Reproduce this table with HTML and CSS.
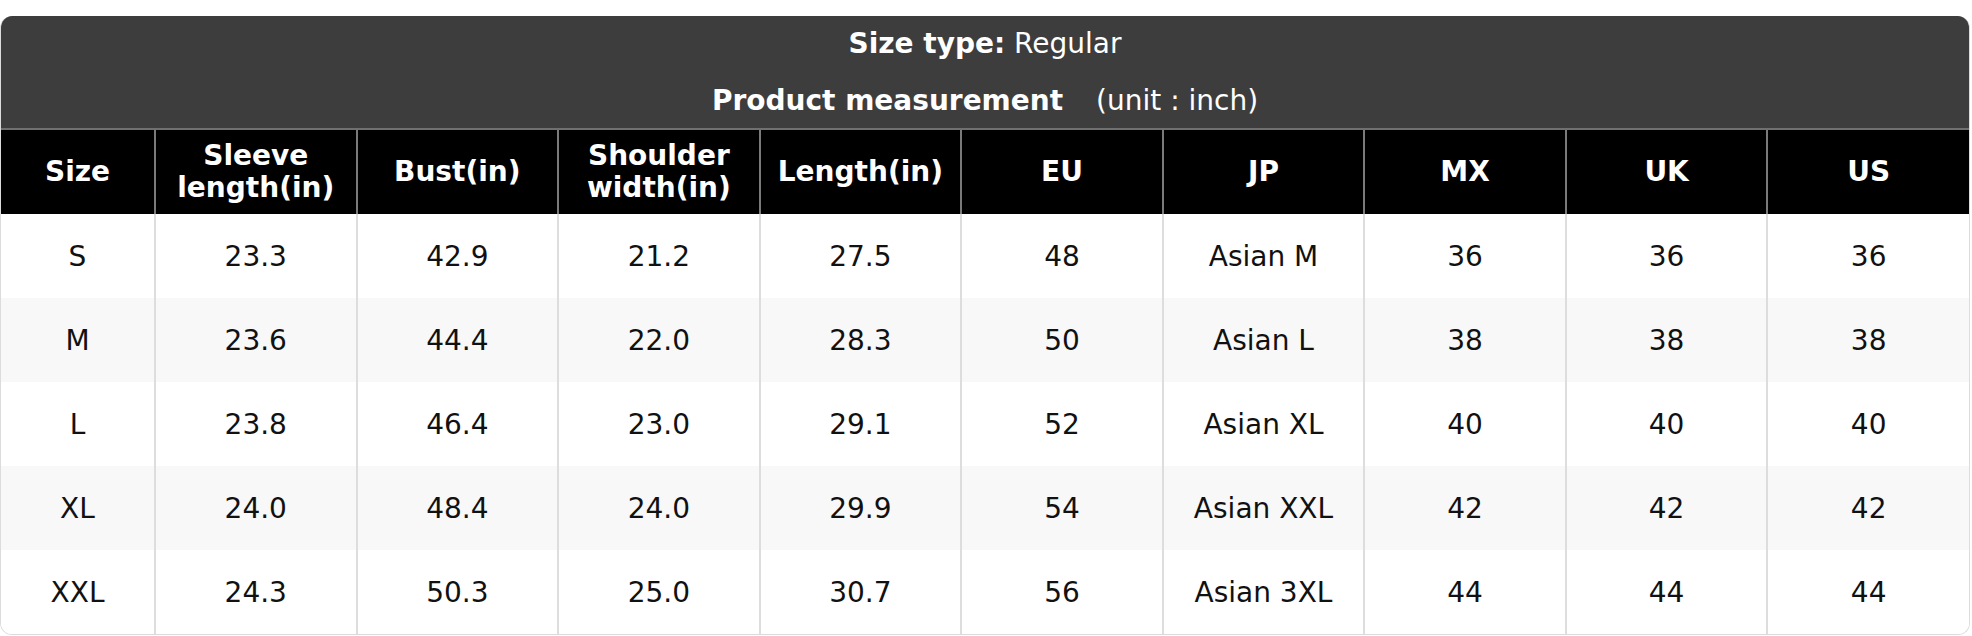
FILE: index.html
```html
<!DOCTYPE html>
<html>
<head>
<meta charset="utf-8">
<link rel="stylesheet" href="styles.css">
</head>
<body>
<div class="card">
  <div class="banner">
    <div class="line"><b>Size type:</b> Regular</div>
    <div class="line line2"><b>Product measurement</b><span class="unit">(unit : inch)</span></div>
  </div>
  <table class="chart">
    <colgroup>
      <col class="c-first">
      <col><col><col><col><col><col><col><col><col>
    </colgroup>
    <thead>
      <tr>
        <th>Size</th>
        <th>Sleeve<br>length(in)</th>
        <th>Bust(in)</th>
        <th>Shoulder<br>width(in)</th>
        <th>Length(in)</th>
        <th>EU</th>
        <th>JP</th>
        <th>MX</th>
        <th>UK</th>
        <th>US</th>
      </tr>
    </thead>
    <tbody>
      <tr><td>S</td><td>23.3</td><td>42.9</td><td>21.2</td><td>27.5</td><td>48</td><td>Asian M</td><td>36</td><td>36</td><td>36</td></tr>
      <tr><td>M</td><td>23.6</td><td>44.4</td><td>22.0</td><td>28.3</td><td>50</td><td>Asian L</td><td>38</td><td>38</td><td>38</td></tr>
      <tr><td>L</td><td>23.8</td><td>46.4</td><td>23.0</td><td>29.1</td><td>52</td><td>Asian XL</td><td>40</td><td>40</td><td>40</td></tr>
      <tr><td>XL</td><td>24.0</td><td>48.4</td><td>24.0</td><td>29.9</td><td>54</td><td>Asian XXL</td><td>42</td><td>42</td><td>42</td></tr>
      <tr><td>XXL</td><td>24.3</td><td>50.3</td><td>25.0</td><td>30.7</td><td>56</td><td>Asian 3XL</td><td>44</td><td>44</td><td>44</td></tr>
    </tbody>
  </table>
</div>
</body>
</html>
```

FILE: styles.css
```css
html, body {
  margin: 0;
  padding: 0;
  background: #ffffff;
}

body {
  font-family: "DejaVu Sans", Verdana, sans-serif;
  font-size: 28px;
  color: #111;
}

.card {
  box-sizing: border-box;
  width: 1970px;
  margin-top: 16px;
  border: 1px solid #dcdcdc;
  border-top: none;
  border-radius: 12px;
  overflow: hidden;
}

.banner {
  background: #3d3d3d;
  color: #fff;
  text-align: center;
  padding: 12px 0 11px;
  border-bottom: 2px solid #707070;
}

.line {
  line-height: 32px;
}

.line2 {
  margin-top: 25px;
}

.unit {
  margin-left: 33px;
}

.chart {
  width: 100%;
  border-collapse: collapse;
  table-layout: fixed;
}

.c-first {
  width: 154px;
}

.chart th {
  background: #000;
  color: #fff;
  font-weight: bold;
  height: 84px;
  padding: 0;
  line-height: 32px;
  border-left: 2px solid #7a7a7a;
  border-right: 2px solid #7a7a7a;
  text-align: center;
  vertical-align: middle;
}

.chart td {
  height: 84px;
  padding: 0;
  text-align: center;
  vertical-align: middle;
  border-left: 2px solid #dddddd;
  border-right: 2px solid #dddddd;
  background: #fff;
}

.chart tbody tr:nth-child(even) td {
  background: #f8f8f8;
}

.chart th:first-child,
.chart td:first-child {
  border-left: none;
}

.chart th:last-child,
.chart td:last-child {
  border-right: none;
}
```
